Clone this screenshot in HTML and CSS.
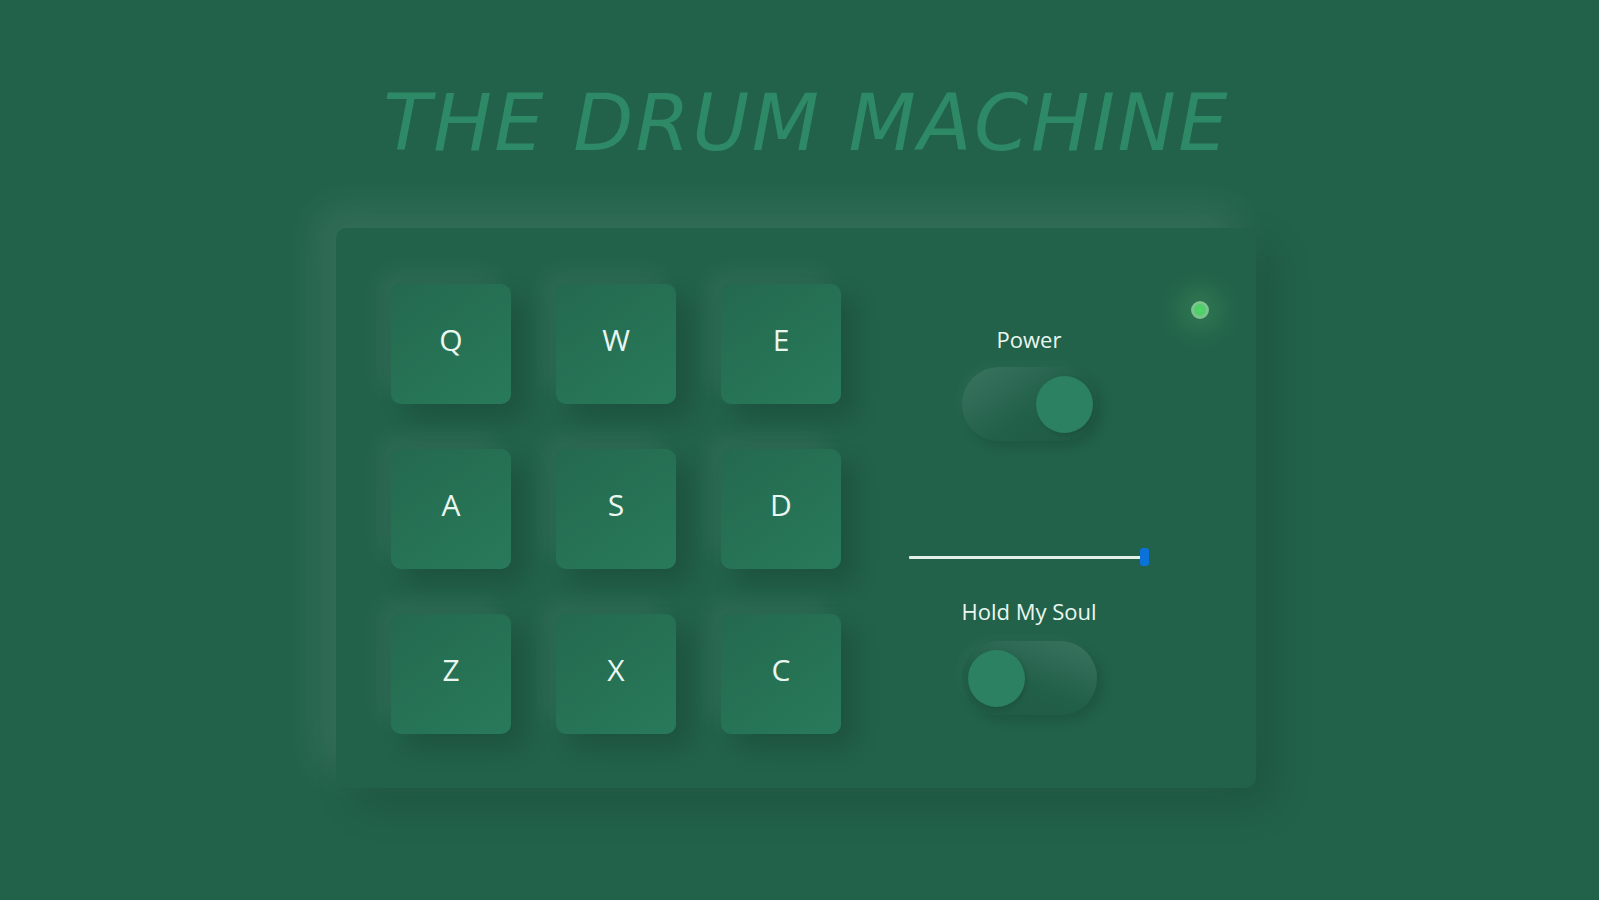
FILE: index.html
```html
<!DOCTYPE html>
<html lang="en">
<head>
<meta charset="utf-8">
<title>The Drum Machine</title>
<link rel="stylesheet" href="styles.css">
</head>
<body>
<main class="page">
  <h1 class="title">THE DRUM MACHINE</h1>
  <section class="machine">
    <div class="pads">
      <button class="pad">Q</button>
      <button class="pad">W</button>
      <button class="pad">E</button>
      <button class="pad">A</button>
      <button class="pad">S</button>
      <button class="pad">D</button>
      <button class="pad">Z</button>
      <button class="pad">X</button>
      <button class="pad">C</button>
    </div>
    <div class="controls">
      <div class="label">Power</div>
      <div class="toggle on"><span class="knob"></span></div>
      <input class="volume" type="range" min="0" max="100" value="100">
      <div class="label label-bank">Hold My Soul</div>
      <div class="toggle off"><span class="knob"></span></div>
    </div>
    <span class="led"></span>
  </section>
</main>
</body>
</html>
```

FILE: styles.css
```css
html, body {
  margin: 0;
  padding: 0;
  background: #22624a;
  height: 100%;
}

.page {
  display: flex;
  flex-direction: column;
  align-items: center;
  padding-top: 84px;
  font-family: "Open Sans", "Noto Sans", sans-serif;
}

.title {
  margin: 0 0 0 14px;
  font-family: "DejaVu Sans", sans-serif;
  font-style: italic;
  font-weight: normal;
  font-size: 78px;
  line-height: 78px;
  color: #2e8a66;
  letter-spacing: 2.4px;
}

.machine {
  position: relative;
  margin: 66px 7px 0 0;
  width: 920px;
  height: 560px;
  box-sizing: border-box;
  padding: 56px 55px;
  display: flex;
  border-radius: 10px;
  background: #22624a;
  box-shadow: -18px -18px 40px rgba(255, 255, 255, 0.09),
              18px 18px 40px rgba(0, 0, 0, 0.13);
}

.pads {
  display: grid;
  grid-template-columns: repeat(3, 120px);
  grid-auto-rows: 120px;
  gap: 45px;
}

.pad {
  border: none;
  border-radius: 10px;
  background: linear-gradient(145deg, #24694f, #287a5a);
  box-shadow: -12px -12px 24px rgba(255, 255, 255, 0.06),
              14px 14px 26px rgba(0, 0, 0, 0.16);
  color: #eaf7f0;
  font-family: "Open Sans", "Noto Sans", sans-serif;
  font-size: 30px;
  padding: 0 0 10px 0;
  cursor: pointer;
}

.controls {
  width: 240px;
  margin-left: 68px;
  display: flex;
  flex-direction: column;
  align-items: center;
  padding-top: 42px;
}

.label {
  color: #eaf7f0;
  font-size: 22px;
  line-height: 26px;
}

.label-bank {
  margin-top: 31px;
}

.toggle {
  position: relative;
  width: 135px;
  height: 74px;
  margin-top: 15px;
  border-radius: 37px;
  background: linear-gradient(145deg, #3a7460, #22604a 55%, #1f5943);
  box-shadow: 6px 6px 12px rgba(0, 0, 0, 0.12),
              -4px -4px 10px rgba(255, 255, 255, 0.03);
}

.toggle.off {
  margin-top: 17px;
  background: linear-gradient(200deg, #3a7460, #22604a 55%, #1f5943);
}

.knob {
  position: absolute;
  top: 9px;
  width: 57px;
  height: 57px;
  border-radius: 50%;
  background: #2c8162;
  box-shadow: 2px 2px 5px rgba(0, 0, 0, 0.12);
}

.toggle.on .knob {
  right: 4px;
}

.toggle.off .knob {
  left: 6px;
}

.volume {
  -webkit-appearance: none;
  appearance: none;
  width: 240px;
  height: 20px;
  margin: 106px 0 0 0;
  background: transparent;
  padding: 0;
}

.volume::-webkit-slider-runnable-track {
  height: 3px;
  background: #e4efe9;
  border-radius: 1px;
}

.volume::-webkit-slider-thumb {
  -webkit-appearance: none;
  width: 9px;
  height: 18px;
  margin-top: -8px;
  border-radius: 3px;
  background: #0a72d8;
}

.led {
  position: absolute;
  top: 73px;
  right: 47px;
  width: 18px;
  height: 18px;
  box-sizing: border-box;
  border-radius: 50%;
  border: 3px solid #7cc48d;
  background: radial-gradient(circle, #4ed86a 0, #4fcf68 50%, #6cc480 100%);
  box-shadow: 0 0 24px 14px rgba(100, 200, 110, 0.2);
}
```
